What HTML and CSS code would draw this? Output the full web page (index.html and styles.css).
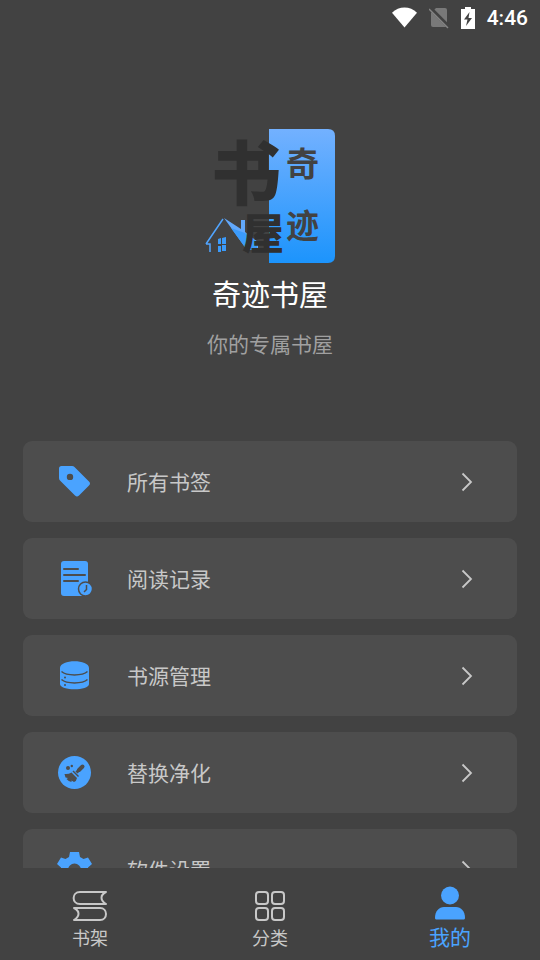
FILE: index.html
```html
<!DOCTYPE html>
<html lang="zh-CN">
<head>
<meta charset="utf-8">
<meta name="viewport" content="width=device-width, initial-scale=1">
<title>奇迹书屋</title>
<link rel="stylesheet" href="styles.css">
</head>
<body>
<svg class="sprite" aria-hidden="true">
  <symbol id="chevron" viewBox="0 0 12 20"><path d="M1.500 1.500 10 10l-8.500 8.500" fill="none" stroke="currentColor" stroke-width="1.800"/></symbol>
</svg>
<header class="status">
  <svg width="25" height="22" viewBox="0 0 26 22"><path d="M0 5.500C7-1.600 19-1.600 26 5.500L13 21Z" fill="#fff"/></svg>
  <svg width="20" height="22" viewBox="0 0 20 22"><path d="M7 1h9q2 0 2 2v17H4q-2 0-2-2V6Z" fill="#797979"/><path d="M1 1 20 20" stroke="#424242" stroke-width="4"/><path d="M0 2 19 21" stroke="#858585" stroke-width="1.500"/></svg>
  <svg width="14" height="22" viewBox="0 0 14 22"><path d="M0 2h4V0h6v2h4v20H0Z" fill="#fff"/><path d="M8.500 5 3 12.500h3.500L5 19l6-8H7.500Z" fill="#424242"/></svg>
  <time class="clock">4:46</time>
</header>
<main class="content">
  <section class="profile">
    <svg class="logo" width="140" height="150" viewBox="0 0 140 150" role="img" aria-label="奇迹书屋">
      <defs><linearGradient id="sky" x1="0" y1="0" x2="0" y2="1"><stop offset="0" stop-color="#73b1ff"/><stop offset="1" stop-color="#1c94fc"/></linearGradient></defs>
      <path d="M69 9h59q7 0 7 7v120q0 7-7 7H69Z" fill="url(#sky)"/>
      <path d="M24 98 41 109V100h4v12l13 10v8H47Z" fill="#62a8fb"/>
      <path d="m31 108 16 22h10v-8L45 113Z" fill="#3b9bfb"/>
      <path d="M6 124h4v8M6 124 23 99" fill="none" stroke="#51a5ff" stroke-width="1.500"/>
      <path d="M18 119l3-1v6h-3zm4-1 4-1v7h-4zm-4 8h3v6h-3zm4-1h4v6h-4z" fill="#3b9bfb"/>
      <text class="brush" x="11" y="80" font-size="70">书</text>
      <text class="brush" x="42" y="129" font-size="42">屋</text>
      <text class="seal" x="86" y="56" font-size="33">奇</text>
      <text class="seal" x="86" y="118" font-size="33">迹</text>
    </svg>
    <h1 class="name">奇迹书屋</h1>
    <p class="tagline">你的专属书屋</p>
  </section>
  <section class="menu">
    <button class="card" type="button">
      <svg class="icon" viewBox="0 0 36 36"><path fill-rule="evenodd" d="M4.500 2H15q1.500 0 2.500 1L32 17.500q2 2 0 4L22 31.500q-2 2-4 0L3 16.500q-1-1-1-2.500V4.500Q2 2 4.500 2ZM13 9.700a3.200 3.200 0 1 0 0 6.400 3.200 3.200 0 0 0 0-6.400Z" fill="#4aa3ff"/></svg>
      <span class="label">所有书签</span><svg class="chevron"><use href="#chevron"/></svg>
    </button>
    <button class="card" type="button">
      <svg class="icon" viewBox="0 0 36 36"><rect x="4" y="0" width="27" height="35" rx="3" fill="#4aa3ff"/><path d="M7 8h14M7 14h21M7 20h14" stroke="#4d4d4d" stroke-width="2" stroke-linecap="round"/><circle cx="28.500" cy="28" r="7" fill="#4aa3ff" stroke="#4d4d4d" stroke-width="1.500"/><path d="M29.500 24v4.500L27 31" fill="none" stroke="#4d4d4d" stroke-width="1.500"/></svg>
      <span class="label">阅读记录</span><svg class="chevron"><use href="#chevron"/></svg>
    </button>
    <button class="card" type="button">
      <svg class="icon" viewBox="0 0 36 36"><path d="M3 10C3 1 32 1 32 10v16c0 7-29 7-29 0Z" fill="#4aa3ff"/><path d="M4.500 13.500c5 4.500 21 4.500 26 0M4.500 21.500c5 4.500 21 4.500 26 0" fill="none" stroke="#4d4d4d" stroke-width="1.500"/><circle cx="8" cy="19.500" r="1" fill="#4d4d4d"/><circle cx="8" cy="27" r="1" fill="#4d4d4d"/></svg>
      <span class="label">书源管理</span><svg class="chevron"><use href="#chevron"/></svg>
    </button>
    <button class="card" type="button">
      <svg class="icon" viewBox="0 0 36 36"><circle cx="17.500" cy="17.500" r="16.500" fill="#4aa3ff"/><g fill="#4d4d4d"><circle cx="11" cy="13" r="2"/><circle cx="14.800" cy="11" r="1.200"/><path d="m16.500 15.500 5.500 5.500-1 1-5.500-5.500Z"/><path d="M14.500 17.500 20 23q-.5 3-3 4l-2.500-1.500v1.500q-3-.5-5-3l1.500-1-2.500-.5-1-3.500q4 .5 7-1.500Z"/></g><path d="m19.500 17.500 3-3" stroke="#4d4d4d" stroke-width="3"/><path d="m22 15 3.500-3.500" stroke="#4d4d4d" stroke-width="4" stroke-linecap="round"/></svg>
      <span class="label">替换净化</span><svg class="chevron"><use href="#chevron"/></svg>
    </button>
    <button class="card" type="button">
      <svg class="icon" viewBox="0 0 36 36"><path fill-rule="evenodd" d="M13 0h9l1 5 3.500 2L31 5.500l4 6.500-4 3.500v5l4 3.500-4 7-4.500-2L23 31l-1 5h-9l-1-5-3.500-2L4 31l-4-7 4-3.500v-5L0 12l4-6.500L8.500 7 12 5ZM17.500 11.500a6.500 6.500 0 1 0 0 13 6.500 6.500 0 0 0 0-13Z" fill="#4aa3ff"/></svg>
      <span class="label">软件设置</span><svg class="chevron"><use href="#chevron"/></svg>
    </button>
  </section>
</main>
<nav class="tabs">
  <a class="tab" href="#shelf">
    <svg width="36" height="32" viewBox="0 0 36 32" fill="none" stroke="currentColor" stroke-width="2" stroke-linejoin="round" stroke-linecap="round"><path d="M34 2H8C-.5 2-.5 14 8 14h26M34 2c-6 3-6 8 0 12M2 18h26c8 0 8 12 0 12H2M2 18c6 3 6 8 0 12"/></svg>
    <span>书架</span>
  </a>
  <a class="tab" href="#category">
    <svg width="32" height="32" viewBox="0 0 32 32" fill="none" stroke="currentColor" stroke-width="2"><rect x="2" y="2" width="12" height="12" rx="3"/><rect x="18" y="2" width="12" height="12" rx="3"/><rect x="2" y="18" width="12" height="12" rx="3"/><rect x="18" y="18" width="12" height="12" rx="3"/></svg>
    <span>分类</span>
  </a>
  <a class="tab active" href="#me" aria-current="page">
    <svg width="32" height="34" viewBox="0 0 32 34" fill="currentColor"><circle cx="16" cy="9.500" r="9"/><path d="M1 32c0-7 4-11 9-11h12c5 0 9 4 9 11q0 1-1 1.500H2Q1 33 1 32Z"/></svg>
    <span>我的</span>
  </a>
</nav>
</body>
</html>
```
FILE: styles.css
```css
* {
  box-sizing: border-box;
}

body {
  margin: 0;
  height: 100vh;
  display: flex;
  flex-direction: column;
  overflow: hidden;
  background: #424242;
  color: #fff;
  font-family: Roboto, "Noto Sans CJK SC", sans-serif;
}

svg {
  display: block;
  flex: none;
}

.sprite {
  display: none;
}

.status {
  display: flex;
  align-items: center;
  justify-content: flex-end;
  gap: 12px;
  height: 36px;
  padding: 0 12px 0 0;
}

.clock {
  font-size: 21px;
  font-weight: 500;
  line-height: 24px;
}

.content {
  flex: 1;
  min-height: 0;
  overflow: hidden;
}

.profile {
  display: flex;
  flex-direction: column;
  align-items: center;
  padding: 84px 0 82px;
}

.brush,
.seal {
  font-family: "Noto Sans CJK SC", sans-serif;
}

.brush {
  fill: #303030;
  font-weight: 900;
}

.seal {
  fill: #424242;
  font-weight: 700;
}

.name {
  margin: 4px 0 0;
  font-size: 29px;
  font-weight: 400;
  line-height: 44px;
}

.tagline {
  margin: 13px 0 0;
  color: #a0a0a0;
  font-size: 21px;
  line-height: 28px;
}

.menu {
  display: flex;
  flex-direction: column;
  gap: 16px;
  padding: 0 23px 16px;
}

.card {
  display: flex;
  align-items: center;
  gap: 34px;
  width: 100%;
  height: 81px;
  padding: 0 44px 0 34px;
  border: 0;
  border-radius: 9px;
  background: #4d4d4d;
  color: #c8c8c8;
  font: inherit;
  font-size: 21px;
  line-height: 32px;
  text-align: left;
}

.icon {
  width: 36px;
  height: 36px;
}

.label {
  flex: 1;
  padding-top: 3px;
}

.chevron {
  width: 12px;
  height: 20px;
}

.tabs {
  display: grid;
  grid-template-columns: repeat(3, 1fr);
  height: 92px;
  padding-bottom: 8px;
}

.tab {
  display: flex;
  flex-direction: column;
  align-items: center;
  justify-content: flex-end;
  gap: 4px;
  color: #c8c8c8;
  font-size: 18px;
  line-height: 26px;
  text-decoration: none;
}

.tab.active {
  color: #4aa3ff;
  font-size: 21px;
  line-height: 28px;
}
```
